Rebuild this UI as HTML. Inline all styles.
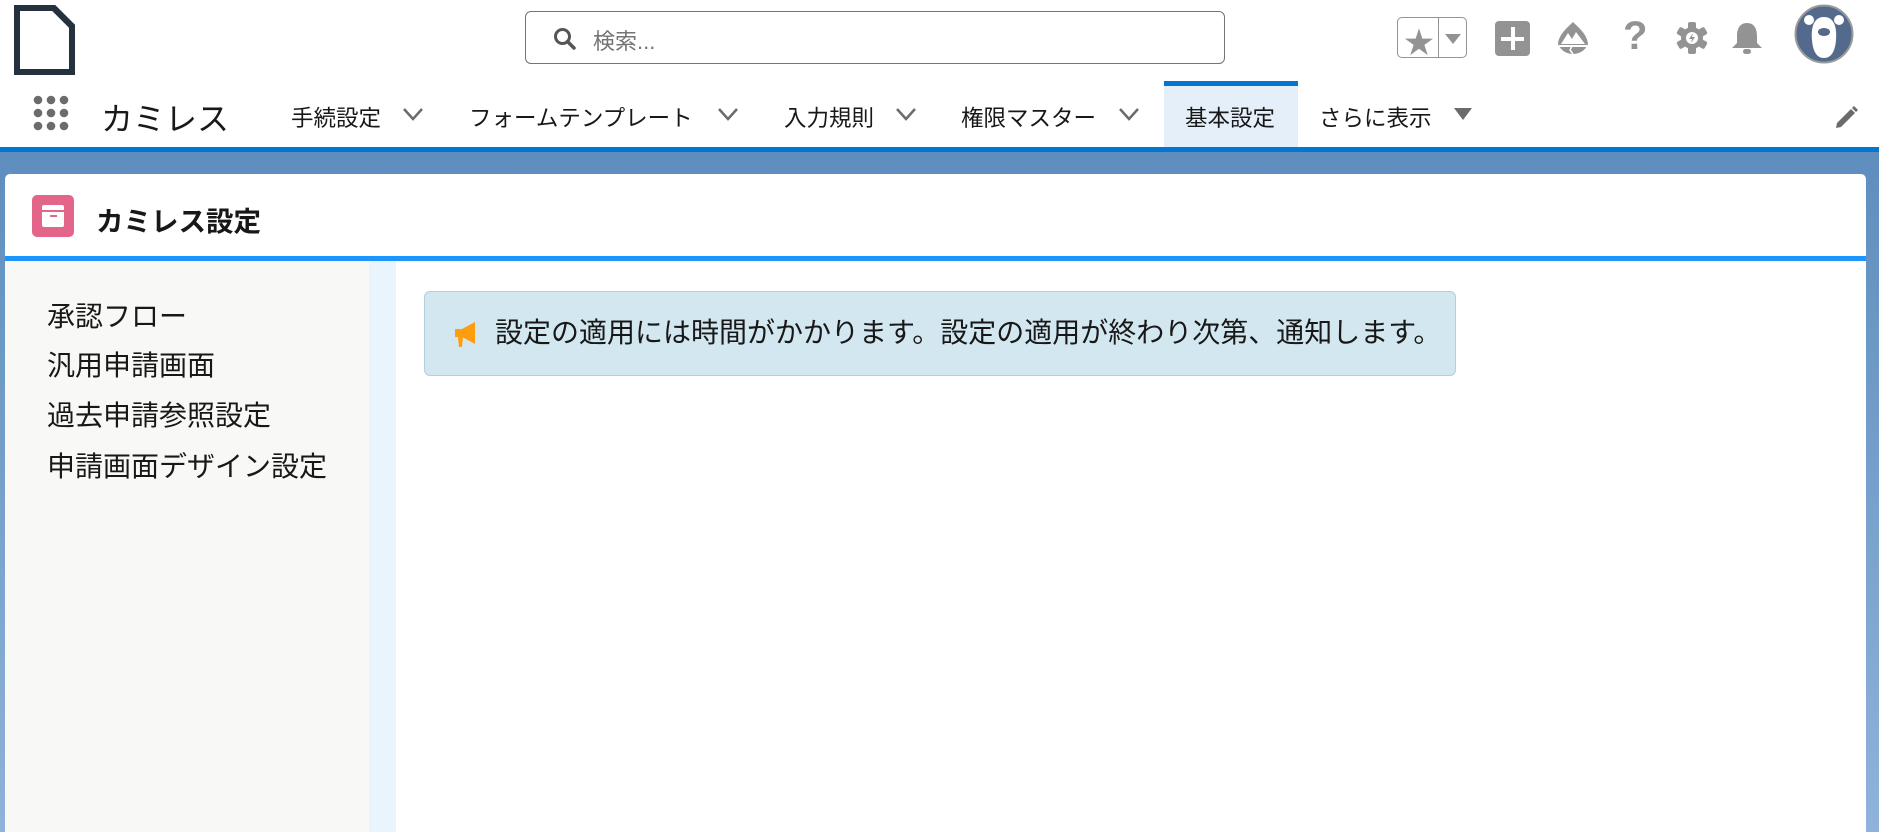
<!DOCTYPE html>
<html><head><meta charset="utf-8">
<style>
*{margin:0;padding:0;box-sizing:border-box}
body{width:1879px;height:832px;overflow:hidden;background:#fff;font-family:"Liberation Sans","Noto Sans CJK JP",sans-serif;color:#181818;position:relative}
.abs{position:absolute}
.nav{font-size:22.5px;top:101px;color:#181818;white-space:nowrap}
.chev{position:absolute;top:107px}
.side{position:absolute;left:47px;font-size:28px;color:#181818;white-space:nowrap}
</style></head><body>
<svg class="abs" style="left:14px;top:5px" width="62" height="70" viewBox="0 0 62 70"><path d="M3 3 H40 L58 21 V67 H3 Z" fill="#fff" stroke="#26313f" stroke-width="6"/><path d="M38 3 L58 23" stroke="#26313f" stroke-width="4"/></svg>
<div class="abs" style="left:525px;top:11px;width:700px;height:53px;border:1px solid #747474;border-radius:6px"></div>
<svg class="abs" style="left:553px;top:27px" width="24" height="24" viewBox="0 0 24 24"><circle cx="9.5" cy="9.5" r="7" fill="none" stroke="#555" stroke-width="3"/><path d="M14.5 14.5 L21 21" stroke="#555" stroke-width="3.5" stroke-linecap="round"/></svg>
<div class="abs" style="left:593px;top:24px;font-size:22px;color:#747474">検索...</div>
<div class="abs" style="left:1397px;top:17px;width:70px;height:41px;border:1px solid #939393;border-radius:5px"></div>
<div class="abs" style="left:1438px;top:17px;width:1px;height:41px;background:#939393"></div>
<div class="abs" style="left:1404px;top:18px;font-size:30px;color:#939393">★</div>
<svg class="abs" style="left:1444px;top:33px" width="18" height="12"><path d="M1 1 H17 L9 11Z" fill="#939393"/></svg>
<div class="abs" style="left:1495px;top:21px;width:35px;height:35px;background:#939393;border-radius:4px"></div>
<div class="abs" style="left:1511px;top:27px;width:3.5px;height:23px;background:#fff"></div>
<div class="abs" style="left:1501px;top:37px;width:23px;height:3.5px;background:#fff"></div>
<svg class="abs" style="left:1555px;top:20px" width="36" height="36" viewBox="0 0 36 36"><path d="M18 2 C24 8 32 14 33 24 C30 31 24 34 18 34 C12 34 6 31 3 24 C4 14 12 8 18 2Z" fill="#939393"/><path d="M6 24 L13 13 L17 19 L21 12 L30 24Z" fill="#fff"/><path d="M4 26 H32" stroke="#fff" stroke-width="2"/><path d="M17 26 L15 30 L18 34" stroke="#fff" stroke-width="1.5" fill="none"/></svg>
<div class="abs" style="left:1623px;top:14px;font-size:40px;font-weight:bold;color:#939393">?</div>
<svg class="abs" style="left:1676px;top:21px" width="32" height="34" viewBox="0 0 32 34"><g fill="#939393"><circle cx="16" cy="17" r="11"/><rect x="12" y="1" width="8" height="32" rx="2"/><rect x="12" y="1" width="8" height="32" rx="2" transform="rotate(60 16 17)"/><rect x="12" y="1" width="8" height="32" rx="2" transform="rotate(120 16 17)"/></g><circle cx="16" cy="17" r="6" fill="#fff"/><path d="M17 12 L13 18 H16 L15 22 L19 16 H16Z" fill="#939393"/></svg>
<svg class="abs" style="left:1730px;top:21px" width="34" height="36" viewBox="0 0 34 36"><path d="M17 2 C25 2 27 9 27 15 V22 L32 27 H2 L7 22 V15 C7 9 9 2 17 2Z" fill="#939393"/><rect x="13" y="28" width="8" height="5" rx="2.5" fill="#939393"/></svg>
<svg class="abs" style="left:1794px;top:4px" width="60" height="60" viewBox="0 0 60 60"><circle cx="30" cy="30" r="28.5" fill="#546a8c" stroke="#9a9a9a" stroke-width="2"/><circle cx="15" cy="16" r="5" fill="#fff"/><circle cx="45" cy="16" r="5" fill="#fff"/><path d="M30 13 C41 13 43 25 42 36 C41 48 37 54 30 54 C23 54 19 48 18 36 C17 25 19 13 30 13Z" fill="#fff"/><ellipse cx="30" cy="28" rx="6" ry="4" fill="#546a8c"/></svg>
<svg class="abs" style="left:33px;top:95px" width="40" height="40" viewBox="0 0 40 40"><g fill="#6b6b6b"><circle cx="5" cy="5" r="4.3"/><circle cx="18" cy="5" r="4.3"/><circle cx="31" cy="5" r="4.3"/><circle cx="5" cy="18" r="4.3"/><circle cx="18" cy="18" r="4.3"/><circle cx="31" cy="18" r="4.3"/><circle cx="5" cy="31" r="4.3"/><circle cx="31" cy="31" r="4.3"/><circle cx="18" cy="31" r="4.3"/></g></svg>
<div class="abs" style="left:101px;top:94px;font-size:32px;color:#181818">カミレス</div>
<div class="abs" style="left:1164px;top:81px;width:134px;height:67px;background:#e5eff9"></div>
<div class="abs" style="left:1164px;top:81px;width:134px;height:5px;background:#0176d3"></div>
<div class="nav abs" style="left:291px">手続設定</div>
<div class="nav abs" style="left:469px">フォームテンプレート</div>
<div class="nav abs" style="left:784px">入力規則</div>
<div class="nav abs" style="left:961px">権限マスター</div>
<div class="nav abs" style="left:1185px">基本設定</div>
<div class="nav abs" style="left:1319px">さらに表示</div>
<svg class="chev" style="left:402px" width="22" height="15"><path d="M2 2 L11 12 L20 2" stroke="#6b6b6b" stroke-width="2.5" fill="none"/></svg>
<svg class="chev" style="left:717px" width="22" height="15"><path d="M2 2 L11 12 L20 2" stroke="#6b6b6b" stroke-width="2.5" fill="none"/></svg>
<svg class="chev" style="left:895px" width="22" height="15"><path d="M2 2 L11 12 L20 2" stroke="#6b6b6b" stroke-width="2.5" fill="none"/></svg>
<svg class="chev" style="left:1118px" width="22" height="15"><path d="M2 2 L11 12 L20 2" stroke="#6b6b6b" stroke-width="2.5" fill="none"/></svg>
<svg class="abs" style="left:1453px;top:107px" width="20" height="14"><path d="M1 1 H19 L10 13Z" fill="#6b6b6b"/></svg>
<svg class="abs" style="left:1833px;top:105px" width="26" height="26" viewBox="0 0 26 26"><path d="M4 18 L18 4 L22 8 L8 22 L3 23Z" fill="#6b6b6b"/><path d="M19 3 L21 1 L25 5 L23 7Z" fill="#6b6b6b"/></svg>
<div class="abs" style="left:0;top:147px;width:1879px;height:5px;background:#0176d3"></div>
<div class="abs" style="left:0;top:152px;width:1879px;height:680px;background:linear-gradient(180deg,#5f8dbd 0%,#6d99c6 30%,#8fb3da 100%)"></div>
<div class="abs" style="left:5px;top:174px;width:1861px;height:660px;background:#fff;border-radius:5px 5px 0 0"></div>
<div class="abs" style="left:32px;top:195px;width:42px;height:42px;background:#e3668a;border-radius:5px"></div>
<div class="abs" style="left:42px;top:205px;width:22px;height:22px;background:#fff;border-radius:2px"></div>
<div class="abs" style="left:42px;top:210px;width:22px;height:2px;background:#e3668a"></div>
<div class="abs" style="left:50px;top:215px;width:7px;height:2px;background:#e3668a"></div>
<div class="abs" style="left:96px;top:199px;font-size:27.5px;font-weight:bold;color:#181818">カミレス設定</div>
<div class="abs" style="left:5px;top:256px;width:1861px;height:5px;background:#1b96ff"></div>
<div class="abs" style="left:5px;top:261px;width:364px;height:571px;background:#f8f8f6"></div>
<div class="abs" style="left:369px;top:261px;width:27px;height:571px;background:#eaf4fd"></div>
<div class="side" style="top:295px">承認フロー</div>
<div class="side" style="top:344px">汎用申請画面</div>
<div class="side" style="top:394px">過去申請参照設定</div>
<div class="side" style="top:445px">申請画面デザイン設定</div>
<div class="abs" style="left:424px;top:291px;width:1032px;height:85px;background:#d3e7f0;border:1px solid #b2cfdc;border-radius:6px"></div>
<svg class="abs" style="left:453px;top:320px" width="26" height="30" viewBox="0 0 26 30"><path d="M2 9 H9 L22 2 V24 L9 17 H2Z" fill="#fe9e0e"/><path d="M5 17 H10 L9 27 H6Z" fill="#fe9e0e"/></svg>
<div class="abs" style="left:495px;top:311px;font-size:28px;color:#181818;white-space:nowrap">設定の適用には時間がかかります。設定の適用が終わり次第、通知します。</div>
</body></html>
